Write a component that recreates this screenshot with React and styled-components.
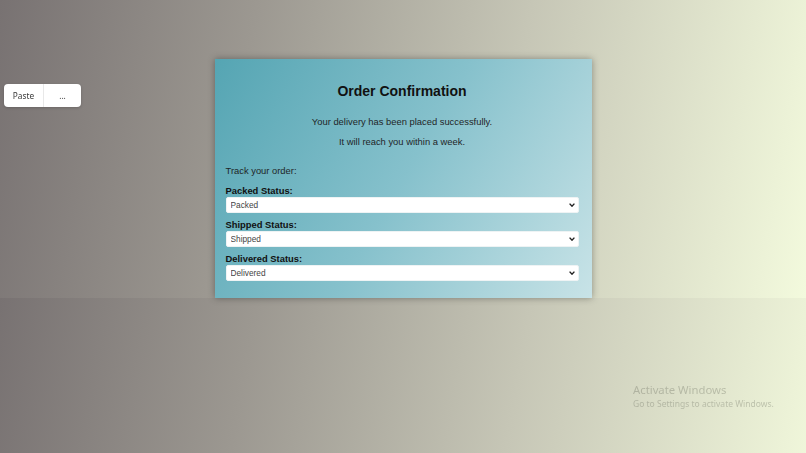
import React from "react";
import styled, {createGlobalStyle} from "styled-components";

const GlobalStyle = createGlobalStyle`
    html, body {
        margin: 0;
        padding: 0;
    }
    body {
        font-family: "Liberation Sans", Arial, sans-serif;
    }
`;

const Page = styled.div`
    min-height: 100vh;
    box-sizing: border-box;
    padding-top: 59px;
    display: flex;
    justify-content: center;
    align-items: flex-start;
    background: linear-gradient(100deg, #787272 0%, #9c9891 30%, #c6c6b6 62%, #f3fadd 100%) 0 0 / 100% 298px repeat-y;
`;

const Card = styled.section`
    width: 377px;
    box-sizing: border-box;
    padding: 24px 13px 17px 11px;
    background: linear-gradient(120deg, #55a5b3 0%, #86c1cc 50%, #c8e3e7 100%);
    box-shadow: 0 0 7px rgba(0, 0, 0, 0.35);
`;

const Title = styled.h2`
    margin: 0;
    font-size: 14px;
    line-height: 16px;
    font-weight: bold;
    text-align: center;
    color: #111;
`;

const Message = styled.p`
    margin: ${props => props.first ? "17px" : "9px"} 0 0;
    font-size: 9.4px;
    line-height: 11px;
    text-align: center;
    color: #1f2628;
`;

const TrackText = styled.p`
    margin: 18px 0 0;
    font-size: 9.4px;
    line-height: 11px;
    color: #1f2628;
`;

const Field = styled.div`
    margin-top: ${props => props.first ? "9px" : "6px"};
`;

const Label = styled.label`
    display: block;
    margin-bottom: 1px;
    font-size: 9.4px;
    line-height: 11px;
    font-weight: bold;
    color: #111;
`;

const SelectWrap = styled.div`
    position: relative;
`;

const Select = styled.select`
    display: block;
    width: 100%;
    height: 16px;
    box-sizing: border-box;
    padding: 0 14px 0 4px;
    border: 1px solid #eef3f4;
    border-radius: 2px;
    background: #fff;
    color: #444;
    font-family: "Liberation Sans", Arial, sans-serif;
    font-size: 8.3px;
    appearance: none;
    outline: none;
`;

const Chevron = styled.svg`
    position: absolute;
    right: 4px;
    top: 6px;
    pointer-events: none;
`;

const PastePopup = styled.div`
    position: fixed;
    left: 4px;
    top: 84px;
    width: 77px;
    height: 23px;
    display: flex;
    background: #fff;
    border-radius: 4px;
    box-shadow: 0 1px 3px rgba(0, 0, 0, 0.18);
    font-family: "Noto Sans", "Open Sans", sans-serif;
    font-size: 8.3px;
    color: #3a3a3a;
`;

const PasteCell = styled.div`
    display: flex;
    align-items: center;
    justify-content: center;
    flex: ${props => props.grow ? 1 : "0 0 39px"};
    border-right: ${props => props.grow ? "none" : "1px solid #e8e8e8"};
`;

const Watermark = styled.div`
    position: fixed;
    left: 633px;
    top: 382px;
    font-family: "Noto Sans", "Open Sans", sans-serif;
    color: rgba(90, 92, 80, 0.3);
    pointer-events: none;
`;

const WatermarkTitle = styled.div`
    font-size: 11.3px;
    line-height: 16px;
`;

const WatermarkSub = styled.div`
    font-size: 8.5px;
    line-height: 12px;
`;

const fields = [
    {label: "Packed Status:", value: "Packed"},
    {label: "Shipped Status:", value: "Shipped"},
    {label: "Delivered Status:", value: "Delivered"}
];

export default function App() {
    return (
        <>
            <GlobalStyle/>
            <Page>
                <Card>
                    <Title>Order Confirmation</Title>
                    <Message first>Your delivery has been placed successfully.</Message>
                    <Message>It will reach you within a week.</Message>
                    <TrackText>Track your order:</TrackText>
                    {fields.map((field, index) =>
                        <Field first={index === 0} key={field.value}>
                            <Label>{field.label}</Label>
                            <SelectWrap>
                                <Select defaultValue={field.value}>
                                    <option value={field.value}>{field.value}</option>
                                </Select>
                                <Chevron width="6" height="4" viewBox="0 0 6 4">
                                    <path d="M0.6 0.6 L3 3.2 L5.4 0.6" fill="none" stroke="#222" strokeWidth="1.4"/>
                                </Chevron>
                            </SelectWrap>
                        </Field>
                    )}
                </Card>
            </Page>
            <PastePopup>
                <PasteCell>Paste</PasteCell>
                <PasteCell grow>...</PasteCell>
            </PastePopup>
            <Watermark>
                <WatermarkTitle>Activate Windows</WatermarkTitle>
                <WatermarkSub>Go to Settings to activate Windows.</WatermarkSub>
            </Watermark>
        </>
    );
}
